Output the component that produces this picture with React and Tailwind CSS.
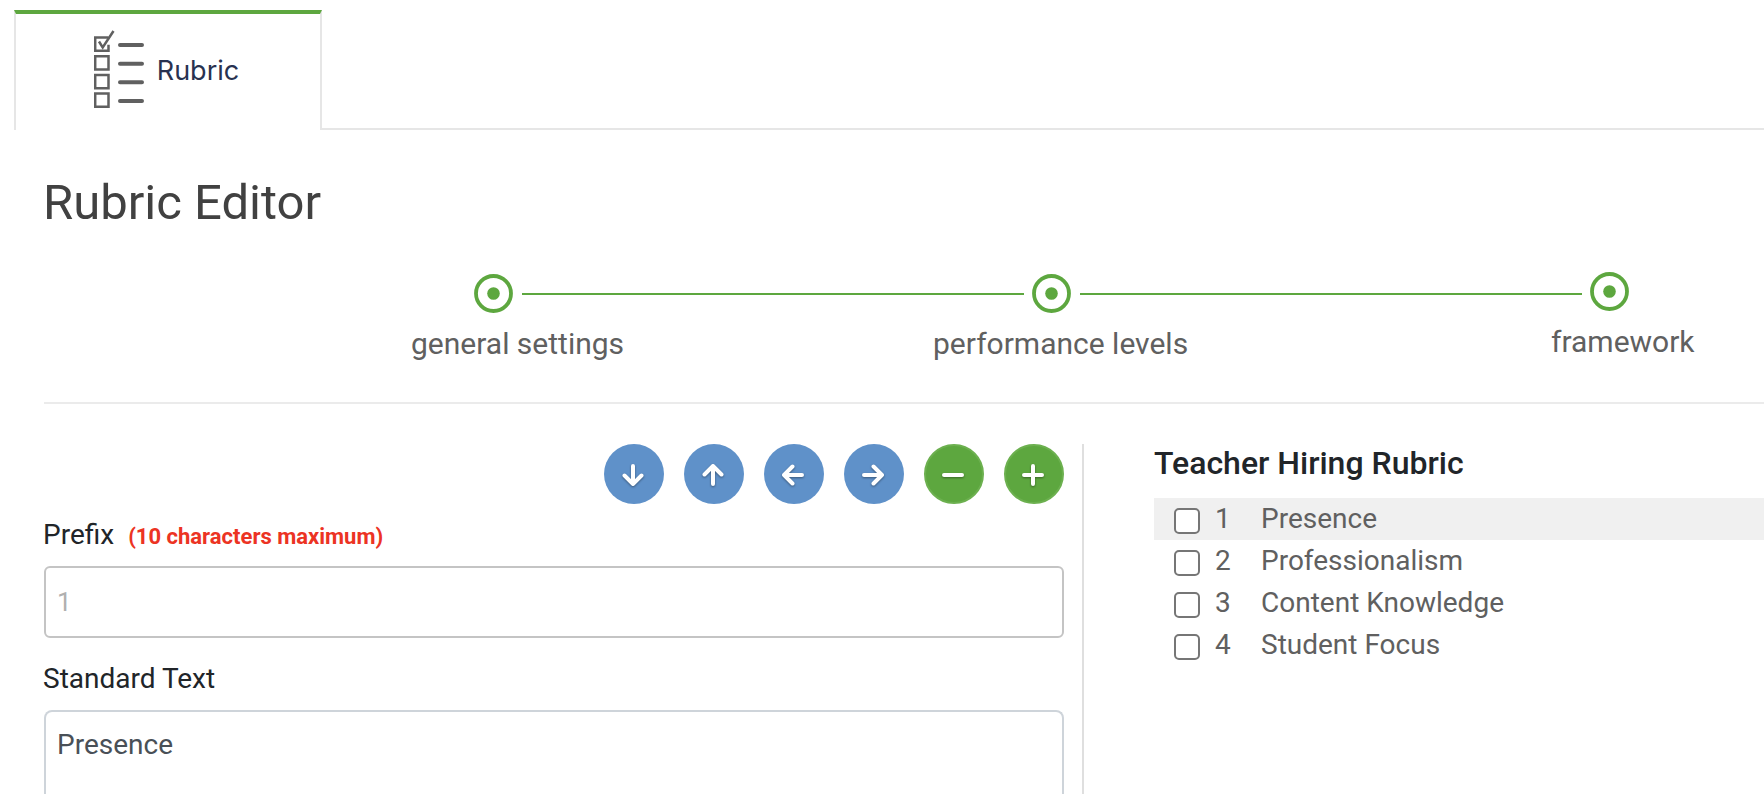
import React, { useState } from "react";

const steps = [
  { id: "general", label: "general settings", labelClass: "-ml-[63px]" },
  { id: "levels", label: "performance levels", labelClass: "-ml-[99px]" },
  { id: "framework", label: "framework", labelClass: "-ml-[39px]" },
];

const standards = [
  { prefix: "1", text: "Presence" },
  { prefix: "2", text: "Professionalism" },
  { prefix: "3", text: "Content Knowledge" },
  { prefix: "4", text: "Student Focus" },
];

const toolbar = [
  { id: "down", label: "Move down", path: "M15 6v18M6.500 15.500l8.500 8.500 8.500-8.500" },
  { id: "up", label: "Move up", path: "M15 24V6M6.500 14.500L15 6l8.500 8.500" },
  { id: "left", label: "Move left", path: "M24 15H6M14.500 6.500L6 15l8.500 8.500" },
  { id: "right", label: "Move right", path: "M6 15h18M15.500 6.500L24 15l-8.500 8.500" },
  { id: "remove", label: "Remove", path: "M6 15h18", green: true },
  { id: "add", label: "Add", path: "M6 15h18M15 6v18", green: true },
];

const App = () => {
  const [selected, setSelected] = useState("1");
  const [checked, setChecked] = useState([]);
  const [text, setText] = useState("Presence");

  const toggle = (prefix) => {
    setChecked(
      checked.includes(prefix) ? checked.filter((p) => p !== prefix) : [...checked, prefix]
    );
  };

  return (
    <div className="flex h-screen flex-col overflow-hidden bg-white pt-[10px] font-['Roboto',sans-serif] text-[28px] leading-[42px] text-[#212529]">
      {/* Tabs */}
      <nav className="flex shrink-0 pl-[14px]">
        <button
          type="button"
          className="flex h-[120px] w-[308px] items-center justify-center gap-[13px] border-x-2 border-t-4 border-x-[#e6e6e6] border-t-[#5da73f] pr-[3px] pb-[2px] font-['Inter',sans-serif] text-[27px] text-[#283250]"
        >
          <RubricIcon />
          <span>Rubric</span>
        </button>
        <div className="flex-1 border-b-2 border-[#e6e6e6]"></div>
      </nav>

      <main className="flex min-h-0 flex-1 flex-col pl-[43px]">
        <h1 className="mt-[41px] shrink-0 text-[49px] leading-[64px] text-[#414141]">Rubric Editor</h1>

        {/* Steps */}
        <ol className="mt-[37px] ml-px flex h-[132px] shrink-0 border-b-2 border-[#ebebeb] pl-[430px] text-[30px] leading-[44px] text-[#606060]">
          {steps.map((step, i) => (
            <Step key={step.id} {...step} last={i === steps.length - 1} />
          ))}
        </ol>

        <div className="mt-10 ml-px grid min-h-0 flex-1 grid-cols-[1040fr_680fr]">
          <form className="flex min-h-0 flex-col border-r-2 border-[#dfdfdf] pr-[18px]">
            <div className="flex shrink-0 justify-end gap-5">
              {toolbar.map((item) => (
                <RoundButton key={item.id} {...item} />
              ))}
            </div>
            <label htmlFor="prefix" className="mt-[10px] -ml-px shrink-0">
              Prefix
              <strong className="ml-[14px] text-[22px] font-bold text-[#ec3323]">
                (10 characters maximum)
              </strong>
            </label>
            <input
              id="prefix"
              maxLength={10}
              placeholder="1"
              className="mt-2 h-[72px] w-full shrink-0 rounded-md border-2 border-[#c4c4c4] px-[11px] text-[26px] placeholder:text-[#b0b0b0]"
            />
            <label htmlFor="standard" className="mt-5 -ml-px shrink-0">
              Standard Text
            </label>
            <textarea
              id="standard"
              value={text}
              onChange={(e) => setText(e.target.value)}
              className="mt-[10px] min-h-0 w-full flex-1 resize-none rounded-t-lg border-2 border-b-0 border-[#ced4da] px-[11px] py-3 text-[#495057]"
            />
          </form>

          <section className="pl-[70px]">
            <h2 className="text-[32px] leading-[38px] font-medium">Teacher Hiring Rubric</h2>
            <ul className="mt-4 text-[#606060]">
              {standards.map((item) => (
                <li
                  key={item.prefix}
                  onClick={() => setSelected(item.prefix)}
                  className={selected === item.prefix ? "bg-[#f0f0f0]" : ""}
                >
                  <label className="flex h-[42px] items-center pl-5">
                    <input
                      type="checkbox"
                      checked={checked.includes(item.prefix)}
                      onChange={() => toggle(item.prefix)}
                      className="mt-1 size-[26px] appearance-none rounded-[5px] border-2 border-[#767676] bg-white checked:bg-[#5f91c9]"
                    />
                    <span className="ml-[15px] w-[46px]">{item.prefix}</span>
                    <span>{item.text}</span>
                  </label>
                </li>
              ))}
            </ul>
          </section>
        </div>
      </main>
    </div>
  );
};

const Step = ({ label, labelClass, last }) => (
  <li className={last ? "w-[174px] flex-none" : "mt-[2px] min-w-0 flex-1"}>
    <div className="flex items-center">
      <svg viewBox="0 0 39 39" className="size-[39px] shrink-0" fill="none">
        <circle cx="19.5" cy="19.5" r="17.5" stroke="#5da73f" strokeWidth="3.800" />
        <circle cx="19.5" cy="19.5" r="6.3" fill="#5da73f" />
      </svg>
      {!last && <div className="mr-2 ml-[9px] h-[2px] flex-1 bg-[#5da73f]"></div>}
    </div>
    <div className={`mt-[9px] whitespace-nowrap ${labelClass}`}>{label}</div>
  </li>
);

const RoundButton = ({ label, path, green }) => (
  <button
    type="button"
    aria-label={label}
    className={`flex size-[60px] items-center justify-center rounded-full ${
      green ? "border-2 border-[#6cb04f] bg-[#5da73f]" : "bg-[#5f91c9]"
    }`}
  >
    <svg
      viewBox="0 0 30 30"
      className="mt-[2px] mr-[2px] size-[30px] drop-shadow-[0_1px_1px_rgba(0,0,0,0.4)]"
      fill="none"
      stroke="#fff"
      strokeWidth="4"
      strokeLinecap="round"
      strokeLinejoin="round"
    >
      <path d={path} />
    </svg>
  </button>
);

const RubricIcon = () => (
  <svg viewBox="0 0 50 82" className="h-[82px] w-[50px]" fill="none" stroke="#606060">
    <path d="M14.500 7.500H1.200v13.300h13.300v-6" strokeWidth="2.500" />
    <path d="M1.200 26.200h13.300v13.300H1.200zM1.200 45h13.300v13.300H1.200zM1.200 63.500h13.300v13.300H1.200z" strokeWidth="2.500" />
    <path d="M5 11.500l3.700 6L19.500 1" strokeWidth="2.500" />
    <path d="M26 15h22M26 33.700h22M26 52.300h22M26 71h22" strokeWidth="4" strokeLinecap="round" />
  </svg>
);

export default App;
